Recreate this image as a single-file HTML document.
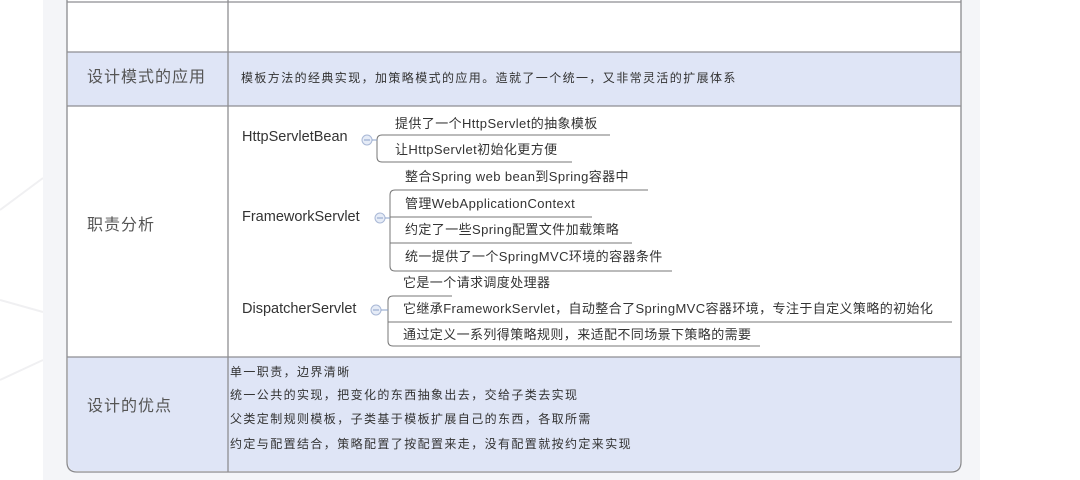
<!DOCTYPE html>
<html><head><meta charset="utf-8"><style>
*{margin:0;padding:0}
body{width:1080px;height:480px;background:#fff;position:relative;overflow:hidden;font-family:"Liberation Sans","Noto Sans CJK SC",sans-serif;color:#333}
.t{position:absolute;white-space:nowrap;line-height:1}
.s{font-size:13px;letter-spacing:0.4px}
.l{font-size:16px;color:#555;letter-spacing:1px}
.n{font-size:14.5px;color:#333}
.b{font-size:12px;color:#333;letter-spacing:1.4px}
</style></head><body>
<svg width="1080" height="480" style="position:absolute;left:0;top:0">
<line x1="0" y1="210" x2="43" y2="178" stroke="#f0f0f2" stroke-width="2"/>
<line x1="0" y1="380" x2="43" y2="360" stroke="#f0f0f2" stroke-width="2"/>
<line x1="0" y1="300" x2="43" y2="312" stroke="#f0f0f2" stroke-width="2"/>
<rect x="43" y="0" width="937" height="480" fill="#f4f5f8"/>
<path d="M67 0 V462 Q67 472 77 472 H951 Q961 472 961 462 V0" fill="#fff" stroke="#8a8a8e" stroke-width="1.3"/>
<rect x="68" y="52" width="892" height="54" fill="#dfe5f6"/>
<path d="M68 357 H960 V462 Q960 471 951 471 H77 Q68 471 68 462 Z" fill="#dfe5f6"/>
<g stroke="#8e8e92" stroke-width="1.3">
<line x1="67" y1="2" x2="961" y2="2"/>
<line x1="67" y1="52" x2="961" y2="52"/>
<line x1="67" y1="106" x2="961" y2="106"/>
<line x1="67" y1="357" x2="961" y2="357"/>
<line x1="228" y1="0" x2="228" y2="472"/>
</g>
<g fill="none" stroke="#777" stroke-width="1">
<path d="M610 135 H382 Q377 135 377 140 V157 Q377 162 382 162 H572"/>
<path d="M648 190 H395 Q390 190 390 195 V266 Q390 271 395 271 H672"/>
<line x1="390" y1="217" x2="592" y2="217"/>
<line x1="390" y1="243" x2="632" y2="243"/>
<path d="M452 296 H393 Q388 296 388 301 V341 Q388 346 393 346 H760"/>
<line x1="388" y1="322" x2="952" y2="322"/>
</g>
<g fill="#e6ecf7" stroke="#a9b8d6" stroke-width="1">
<circle cx="367" cy="140" r="5"/><circle cx="380" cy="218" r="5"/><circle cx="376" cy="310" r="5"/>
</g>
<g stroke="#8aa0c8" stroke-width="1">
<line x1="364" y1="140" x2="370" y2="140"/><line x1="377" y1="218" x2="383" y2="218"/><line x1="373" y1="310" x2="379" y2="310"/>
<line x1="372" y1="140" x2="377" y2="140"/><line x1="385" y1="218" x2="390" y2="218"/><line x1="381" y1="310" x2="388" y2="310"/>
</g>
</svg>
<div class="t l" style="left:87px;top:70px">设计模式的应用</div>
<div class="t l" style="left:87px;top:218px">职责分析</div>
<div class="t l" style="left:87px;top:399px">设计的优点</div>
<div class="t b" style="left:241px;top:72px">模板方法的经典实现，加策略模式的应用。造就了一个统一，又非常灵活的扩展体系</div>
<div class="t n" style="left:242px;top:130px">HttpServletBean</div>
<div class="t n" style="left:242px;top:210px">FrameworkServlet</div>
<div class="t n" style="left:242px;top:302px">DispatcherServlet</div>
<div class="t s" style="left:395px;top:117px">提供了一个HttpServlet的抽象模板</div>
<div class="t s" style="left:395px;top:143px">让HttpServlet初始化更方便</div>
<div class="t s" style="left:405px;top:170px">整合Spring web bean到Spring容器中</div>
<div class="t s" style="left:405px;top:197px">管理WebApplicationContext</div>
<div class="t s" style="left:405px;top:223px">约定了一些Spring配置文件加载策略</div>
<div class="t s" style="left:405px;top:250px">统一提供了一个SpringMVC环境的容器条件</div>
<div class="t s" style="left:403px;top:276px">它是一个请求调度处理器</div>
<div class="t s" style="left:403px;top:302px">它继承FrameworkServlet，自动整合了SpringMVC容器环境，专注于自定义策略的初始化</div>
<div class="t s" style="left:403px;top:328px">通过定义一系列得策略规则，来适配不同场景下策略的需要</div>
<div class="t b" style="left:230px;top:366px">单一职责，边界清晰</div>
<div class="t b" style="left:230px;top:389px">统一公共的实现，把变化的东西抽象出去，交给子类去实现</div>
<div class="t b" style="left:230px;top:413px">父类定制规则模板，子类基于模板扩展自己的东西，各取所需</div>
<div class="t b" style="left:230px;top:438px">约定与配置结合，策略配置了按配置来走，没有配置就按约定来实现</div>
</body></html>
